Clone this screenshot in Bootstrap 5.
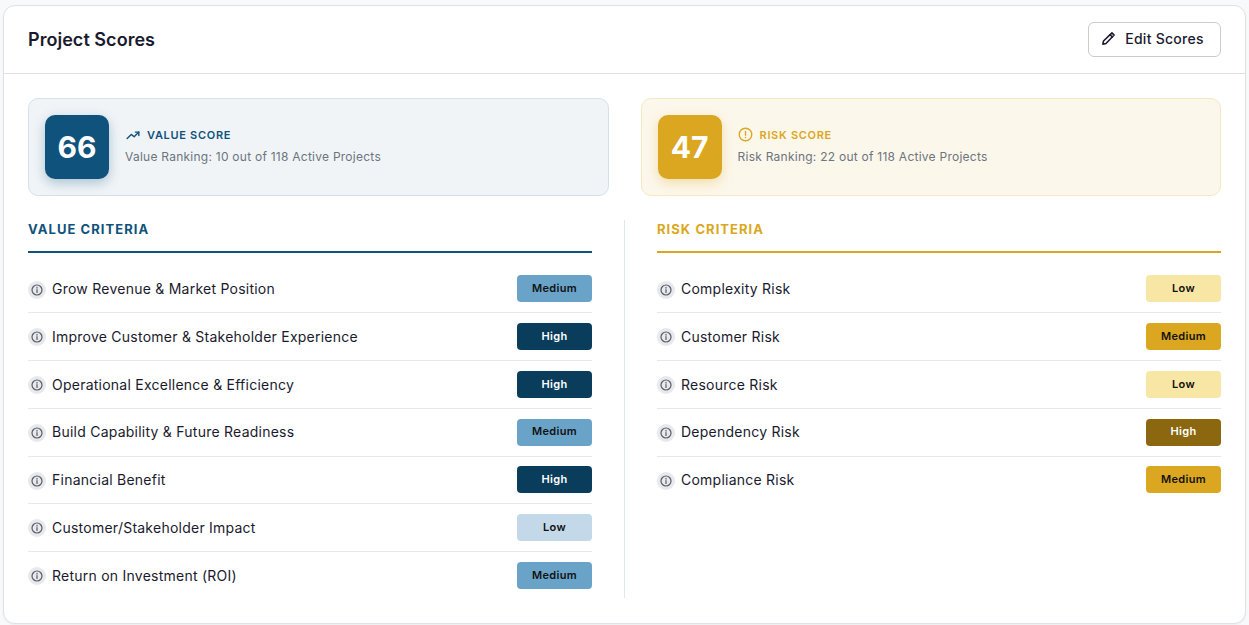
<!DOCTYPE html>
<html lang="en">
<head>
    <meta charset="UTF-8">
    <meta name="viewport" content="width=device-width, initial-scale=1.0">
    <title>Project Scores</title>
    <link href="https://cdn.jsdelivr.net/npm/bootstrap@5.3.0/dist/css/bootstrap.min.css" rel="stylesheet">
    <style>
        body { background: #f8f9fa; font-family: "Inter", sans-serif; color: #1a1a2e; padding: 5px 3px 1px 3px; height: 625px; overflow: hidden; }
        .scores-card { background: #fff; border: 1px solid #dee2e6; border-radius: 12px; height: 619px; box-shadow: 0 1px 2px rgba(0,0,0,.05); }
        .scores-head { height: 68px; padding: 0 24px; border-bottom: 1px solid #dee2e6; }
        .scores-title { font-size: 18px; font-weight: 600; color: #1a1a2e; margin: 0; letter-spacing: .04px; }
        .edit-btn { width: 133px; height: 35px; font-size: 14px; font-weight: 500; color: #1a1a2e; background: #fff; border: 1px solid #ccc; border-radius: 6px; gap: 9px; padding: 0 4px 2px 0; letter-spacing: .27px; }
        .scores-body { padding: 24px; }
        .summary-grid { display: grid; grid-template-columns: 1fr 1fr; gap: 32px; margin-bottom: 24px; }
        .summary-box { height: 98px; padding: 16px; border-radius: 10px; gap: 16px; border: 1px solid; }
        .summary-value { background: #f0f4f7; border-color: #d5e0ea; }
        .summary-risk { background: #fcf7eb; border-color: #f7e8c4; }
        .score-tile { width: 64px; height: 64px; border-radius: 10px; color: #fff; font-size: 30px; font-weight: 700; flex-shrink: 0; padding-top: 1px; }
        .tile-value { background: #0f527b; box-shadow: 0 4px 12px rgba(15,82,123,.3); }
        .tile-risk { background: #dba720; box-shadow: 0 4px 12px rgba(219,167,32,.3); }
        .score-text { margin-bottom: 2px; }
        .score-label { font-size: 11px; font-weight: 600; letter-spacing: .7px; gap: 6px; line-height: 16px; margin-bottom: 5px; }
        .label-value { color: #0f527b; }
        .label-risk { color: #dba720; }
        .risk-gap { gap: 7px; }
        .score-rank { font-size: 12px; color: #6c757d; line-height: 18px; letter-spacing: .25px; }
        .criteria-grid { display: grid; grid-template-columns: 1fr 1px 1fr; gap: 32px; }
        .criteria-rule { background: #e2e6ee; height: 378px; }
        .criteria-title { font-size: 13px; font-weight: 700; letter-spacing: 1.05px; line-height: 18px; padding: 0 0 13px 0; margin: 0 0 12.5px 0; border-bottom: 2px solid; }
        .criteria-row { height: 47.75px; border-bottom: 1px solid #e5e8ef; }
        .criteria-row:last-child { border-bottom-color: transparent; }
        .criteria-name { font-size: 14px; gap: 6px; color: #1a1a2e; letter-spacing: .24px; margin-bottom: .5px; }
        .info-dot { width: 18px; height: 18px; border-radius: 50%; background: #e7e9ed; flex-shrink: 0; margin-top: 2px; }
        .level-pill { width: 75px; height: 27px; border-radius: 4px; font-size: 11px; font-weight: 600; letter-spacing: .3px; padding-bottom: 1px; }
        .val-low { background: #c3d9ea; color: #111; }
        .val-medium { background: #6aa3c8; color: #111; }
        .val-high { background: #0a3d5c; color: #fff; }
        .risk-low { background: #f7e6a4; color: #111; }
        .risk-medium { background: #dba720; color: #111; }
        .risk-high { background: #8b680f; color: #fff; }
    </style>
</head>
<body>
    <svg class="d-none">
        <symbol id="info" viewBox="0 0 12 12"><circle cx="6" cy="6" r="5" fill="none" stroke="#555c66" stroke-width="1.2"/><path d="M6 5.6v2.8M6 3.4v.7" stroke="#555c66" stroke-width="1.2" stroke-linecap="round"/></symbol>
    </svg>
    <div class="scores-card">
        <div class="scores-head d-flex justify-content-between align-items-center">
            <h5 class="scores-title">Project Scores</h5>
            <button class="btn edit-btn d-flex align-items-center justify-content-center">
                <svg width="15" height="15" viewBox="0 0 24 24" fill="none" stroke="#1a1a2e" stroke-width="2.5" stroke-linecap="round" stroke-linejoin="round"><path d="M17.5 3l3.5 3.5L8 20l-5 1 1-5z"/><path d="M14.5 6l3.5 3.5"/></svg>
                Edit Scores
            </button>
        </div>
        <div class="scores-body">
            <div class="summary-grid">
                <div class="summary-box summary-value d-flex align-items-center">
                    <div class="score-tile tile-value d-flex align-items-center justify-content-center">66</div>
                    <div class="score-text">
                        <div class="score-label label-value d-flex align-items-center">
                            <svg width="16" height="14" viewBox="0 0 24 24" fill="none" stroke="#0f527b" stroke-width="2.4" stroke-linecap="round" stroke-linejoin="round"><path d="M2 18l7-7 5 4 8-8"/><path d="M16 7h6v6"/></svg>
                            VALUE SCORE
                        </div>
                        <div class="score-rank">Value Ranking: 10 out of 118 Active Projects</div>
                    </div>
                </div>
                <div class="summary-box summary-risk d-flex align-items-center">
                    <div class="score-tile tile-risk d-flex align-items-center justify-content-center">47</div>
                    <div class="score-text">
                        <div class="score-label risk-gap label-risk d-flex align-items-center">
                            <svg width="15" height="15" viewBox="0 0 24 24" fill="none" stroke="#dba720" stroke-width="2.2" stroke-linecap="round"><circle cx="12" cy="12" r="10"/><path d="M12 7v6M12 16.5v.5"/></svg>
                            RISK SCORE
                        </div>
                        <div class="score-rank">Risk Ranking: 22 out of 118 Active Projects</div>
                    </div>
                </div>
            </div>
            <div class="criteria-grid">
                <div>
                    <h6 class="criteria-title label-value">VALUE CRITERIA</h6>
                    <div class="criteria-row d-flex justify-content-between align-items-center"><span class="criteria-name d-flex align-items-center"><span class="info-dot d-flex align-items-center justify-content-center"><svg width="12" height="12"><use href="#info"/></svg></span>Grow Revenue &amp; Market Position</span><span class="level-pill val-medium d-flex align-items-center justify-content-center">Medium</span></div>
                    <div class="criteria-row d-flex justify-content-between align-items-center"><span class="criteria-name d-flex align-items-center"><span class="info-dot d-flex align-items-center justify-content-center"><svg width="12" height="12"><use href="#info"/></svg></span>Improve Customer &amp; Stakeholder Experience</span><span class="level-pill val-high d-flex align-items-center justify-content-center">High</span></div>
                    <div class="criteria-row d-flex justify-content-between align-items-center"><span class="criteria-name d-flex align-items-center"><span class="info-dot d-flex align-items-center justify-content-center"><svg width="12" height="12"><use href="#info"/></svg></span>Operational Excellence &amp; Efficiency</span><span class="level-pill val-high d-flex align-items-center justify-content-center">High</span></div>
                    <div class="criteria-row d-flex justify-content-between align-items-center"><span class="criteria-name d-flex align-items-center"><span class="info-dot d-flex align-items-center justify-content-center"><svg width="12" height="12"><use href="#info"/></svg></span>Build Capability &amp; Future Readiness</span><span class="level-pill val-medium d-flex align-items-center justify-content-center">Medium</span></div>
                    <div class="criteria-row d-flex justify-content-between align-items-center"><span class="criteria-name d-flex align-items-center"><span class="info-dot d-flex align-items-center justify-content-center"><svg width="12" height="12"><use href="#info"/></svg></span>Financial Benefit</span><span class="level-pill val-high d-flex align-items-center justify-content-center">High</span></div>
                    <div class="criteria-row d-flex justify-content-between align-items-center"><span class="criteria-name d-flex align-items-center"><span class="info-dot d-flex align-items-center justify-content-center"><svg width="12" height="12"><use href="#info"/></svg></span>Customer/Stakeholder Impact</span><span class="level-pill val-low d-flex align-items-center justify-content-center">Low</span></div>
                    <div class="criteria-row d-flex justify-content-between align-items-center"><span class="criteria-name d-flex align-items-center"><span class="info-dot d-flex align-items-center justify-content-center"><svg width="12" height="12"><use href="#info"/></svg></span>Return on Investment (ROI)</span><span class="level-pill val-medium d-flex align-items-center justify-content-center">Medium</span></div>
                </div>
                <div class="criteria-rule"></div>
                <div>
                    <h6 class="criteria-title label-risk">RISK CRITERIA</h6>
                    <div class="criteria-row d-flex justify-content-between align-items-center"><span class="criteria-name d-flex align-items-center"><span class="info-dot d-flex align-items-center justify-content-center"><svg width="12" height="12"><use href="#info"/></svg></span>Complexity Risk</span><span class="level-pill risk-low d-flex align-items-center justify-content-center">Low</span></div>
                    <div class="criteria-row d-flex justify-content-between align-items-center"><span class="criteria-name d-flex align-items-center"><span class="info-dot d-flex align-items-center justify-content-center"><svg width="12" height="12"><use href="#info"/></svg></span>Customer Risk</span><span class="level-pill risk-medium d-flex align-items-center justify-content-center">Medium</span></div>
                    <div class="criteria-row d-flex justify-content-between align-items-center"><span class="criteria-name d-flex align-items-center"><span class="info-dot d-flex align-items-center justify-content-center"><svg width="12" height="12"><use href="#info"/></svg></span>Resource Risk</span><span class="level-pill risk-low d-flex align-items-center justify-content-center">Low</span></div>
                    <div class="criteria-row d-flex justify-content-between align-items-center"><span class="criteria-name d-flex align-items-center"><span class="info-dot d-flex align-items-center justify-content-center"><svg width="12" height="12"><use href="#info"/></svg></span>Dependency Risk</span><span class="level-pill risk-high d-flex align-items-center justify-content-center">High</span></div>
                    <div class="criteria-row d-flex justify-content-between align-items-center"><span class="criteria-name d-flex align-items-center"><span class="info-dot d-flex align-items-center justify-content-center"><svg width="12" height="12"><use href="#info"/></svg></span>Compliance Risk</span><span class="level-pill risk-medium d-flex align-items-center justify-content-center">Medium</span></div>
                </div>
            </div>
        </div>
    </div>
</body>
</html>
